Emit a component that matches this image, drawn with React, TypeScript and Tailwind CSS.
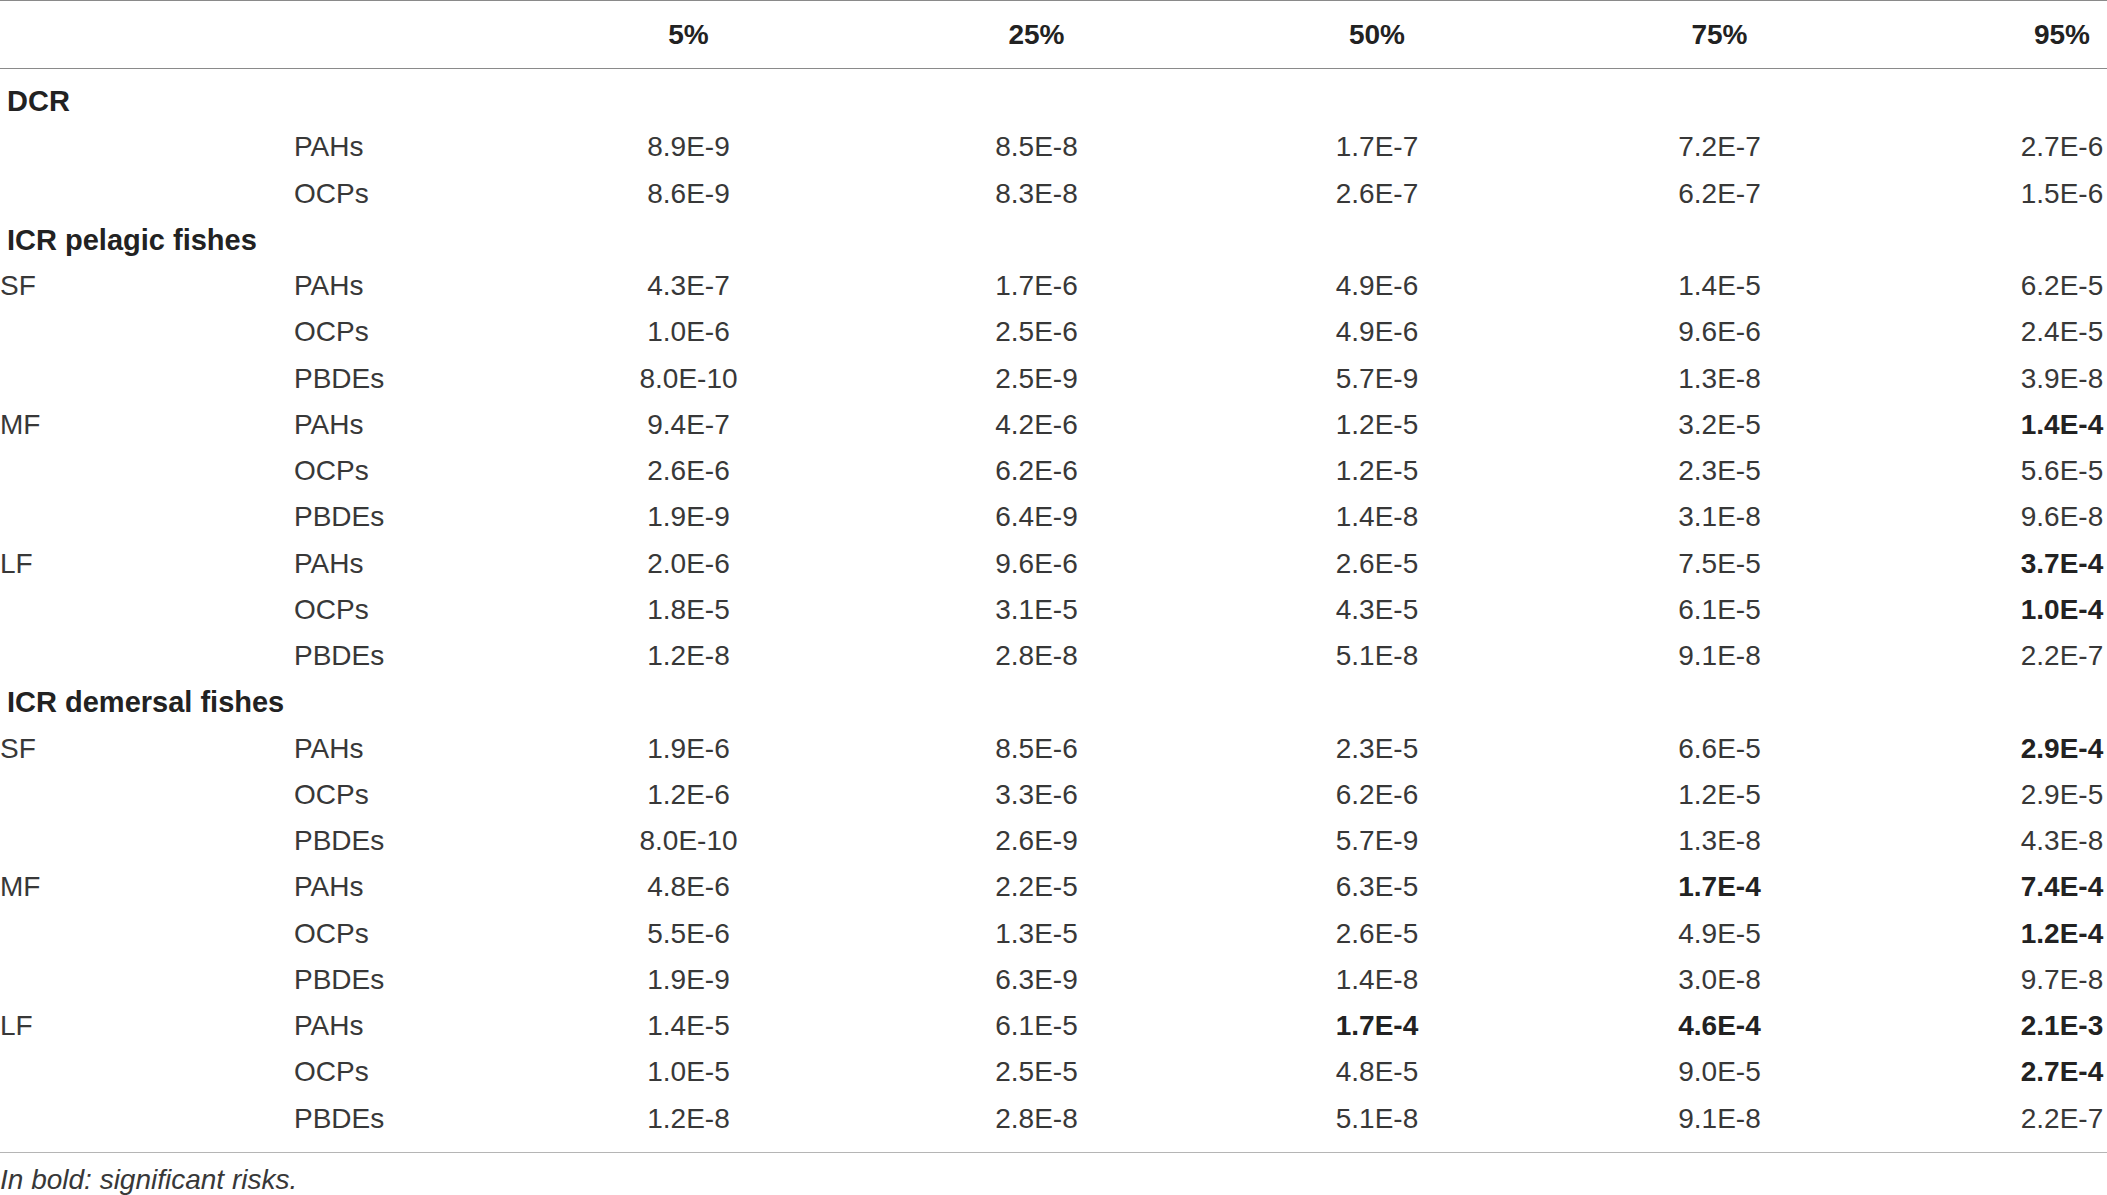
import React from "react";

type Row = { group?: string; sub?: string; name?: string; vals?: string[] };

const rows: Row[] = [
  { group: "DCR" },
  { name: "PAHs", vals: ["8.9E-9", "8.5E-8", "1.7E-7", "7.2E-7", "2.7E-6"] },
  { name: "OCPs", vals: ["8.6E-9", "8.3E-8", "2.6E-7", "6.2E-7", "1.5E-6"] },
  { group: "ICR pelagic fishes" },
  { sub: "SF", name: "PAHs", vals: ["4.3E-7", "1.7E-6", "4.9E-6", "1.4E-5", "6.2E-5"] },
  { name: "OCPs", vals: ["1.0E-6", "2.5E-6", "4.9E-6", "9.6E-6", "2.4E-5"] },
  { name: "PBDEs", vals: ["8.0E-10", "2.5E-9", "5.7E-9", "1.3E-8", "3.9E-8"] },
  { sub: "MF", name: "PAHs", vals: ["9.4E-7", "4.2E-6", "1.2E-5", "3.2E-5", "*1.4E-4"] },
  { name: "OCPs", vals: ["2.6E-6", "6.2E-6", "1.2E-5", "2.3E-5", "5.6E-5"] },
  { name: "PBDEs", vals: ["1.9E-9", "6.4E-9", "1.4E-8", "3.1E-8", "9.6E-8"] },
  { sub: "LF", name: "PAHs", vals: ["2.0E-6", "9.6E-6", "2.6E-5", "7.5E-5", "*3.7E-4"] },
  { name: "OCPs", vals: ["1.8E-5", "3.1E-5", "4.3E-5", "6.1E-5", "*1.0E-4"] },
  { name: "PBDEs", vals: ["1.2E-8", "2.8E-8", "5.1E-8", "9.1E-8", "2.2E-7"] },
  { group: "ICR demersal fishes" },
  { sub: "SF", name: "PAHs", vals: ["1.9E-6", "8.5E-6", "2.3E-5", "6.6E-5", "*2.9E-4"] },
  { name: "OCPs", vals: ["1.2E-6", "3.3E-6", "6.2E-6", "1.2E-5", "2.9E-5"] },
  { name: "PBDEs", vals: ["8.0E-10", "2.6E-9", "5.7E-9", "1.3E-8", "4.3E-8"] },
  { sub: "MF", name: "PAHs", vals: ["4.8E-6", "2.2E-5", "6.3E-5", "*1.7E-4", "*7.4E-4"] },
  { name: "OCPs", vals: ["5.5E-6", "1.3E-5", "2.6E-5", "4.9E-5", "*1.2E-4"] },
  { name: "PBDEs", vals: ["1.9E-9", "6.3E-9", "1.4E-8", "3.0E-8", "9.7E-8"] },
  { sub: "LF", name: "PAHs", vals: ["1.4E-5", "6.1E-5", "*1.7E-4", "*4.6E-4", "*2.1E-3"] },
  { name: "OCPs", vals: ["1.0E-5", "2.5E-5", "4.8E-5", "9.0E-5", "*2.7E-4"] },
  { name: "PBDEs", vals: ["1.2E-8", "2.8E-8", "5.1E-8", "9.1E-8", "2.2E-7"] },
];

const headers = ["5%", "25%", "50%", "75%", "95%"];

const gridCols = "grid grid-cols-[294px_221px_347px_349px_332px_353px_332px]";

export default function App() {
  return (
    <div
      className="w-[2107px] h-[1195px] overflow-hidden bg-white text-[#383838]"
      style={{ fontFamily: '"Liberation Sans", Arial, sans-serif' }}
    >
      <div className="w-[2228px]">
        <div className={`${gridCols} h-[69px] border-t border-b border-[#8a8a8a] items-center text-[28px] font-bold text-[#222]`}>
          <div />
          <div />
          {headers.map((h) => (
            <div key={h} className="text-center">
              {h}
            </div>
          ))}
        </div>
        <div className="pt-[9px] pb-[10px] border-b border-[#b5b5b5]">
          {rows.map((r, i) =>
            r.group ? (
              <div key={i} className="h-[46.25px] leading-[46.25px] text-[29px] font-bold text-[#222] pl-[7px]">
                {r.group}
              </div>
            ) : (
              <div key={i} className={`${gridCols} h-[46.25px] leading-[46.25px] text-[28px]`}>
                <div>{r.sub ?? ""}</div>
                <div>{r.name}</div>
                {r.vals!.map((v, j) =>
                  v.startsWith("*") ? (
                    <div key={j} className="text-center font-bold text-[#222]">
                      {v.slice(1)}
                    </div>
                  ) : (
                    <div key={j} className="text-center">
                      {v}
                    </div>
                  )
                )}
              </div>
            )
          )}
        </div>
        <div className="pt-[11px] text-[28px] leading-[32px] italic text-[#383838]">In bold: significant risks.</div>
      </div>
    </div>
  );
}
